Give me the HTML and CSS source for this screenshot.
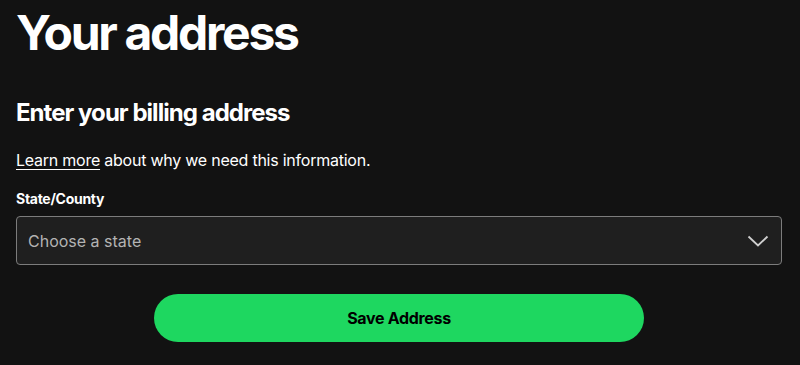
FILE: index.html
```html
<!DOCTYPE html>
<html lang="en">
<head>
    <meta charset="UTF-8">
    <meta name="viewport" content="width=device-width, initial-scale=1.0">
    <title>Your address</title>
    <link rel="stylesheet" href="styles.css">
</head>
<body>
    <main class="address-page">
        <h1 class="page-title">Your address</h1>

        <form class="address-form">
            <h2 class="form-title">Enter your billing address</h2>
            <p class="form-info"><a href="#">Learn more</a> about why we need this information.</p>

            <div class="field">
                <label for="state" class="field-label">State/County</label>
                <div class="select-wrap">
                    <select id="state" class="field-select">
                        <option value="">Choose a state</option>
                    </select>
                    <svg class="select-arrow" width="22" height="12" viewBox="0 0 22 12" aria-hidden="true">
                        <path d="M1.5 1.5 L11 10.5 L20.5 1.5" fill="none" stroke="#cfcfcf" stroke-width="1.8"/>
                    </svg>
                </div>
            </div>

            <div class="actions">
                <button type="submit" class="save-btn">Save Address</button>
            </div>
        </form>
    </main>
</body>
</html>
```

FILE: styles.css
```css
/* Reset and Base Styles */
* {
    margin: 0;
    padding: 0;
    box-sizing: border-box;
}

body {
    font-family: Inter, "Noto Sans", sans-serif;
    background-color: #121212;
    color: #ffffff;
}

.address-page {
    padding: 0 18px 0 16px;
}

.page-title {
    font-size: 48px;
    font-weight: 700;
    letter-spacing: -0.048em;
    line-height: 64px;
    padding-top: 1px;
}

/* Form */
.form-title {
    font-size: 24px;
    font-weight: 700;
    letter-spacing: -0.04em;
    line-height: 32px;
    margin-top: 32px;
}

.form-info {
    font-size: 16px;
    line-height: 24px;
    margin-top: 19px;
    letter-spacing: -0.015em;
}

.form-info a {
    color: #ffffff;
    text-decoration: underline;
    text-underline-offset: 3px;
}

.field {
    margin-top: 17px;
}

.field-label {
    display: block;
    font-size: 14px;
    font-weight: 700;
    line-height: 20px;
    margin-bottom: 7px;
    letter-spacing: -0.02em;
}

.select-wrap {
    position: relative;
}

.field-select {
    appearance: none;
    width: 100%;
    height: 49px;
    padding: 0 48px 0 11px;
    background-color: #1f1f1f;
    border: 1px solid #7c7c7c;
    border-radius: 4px;
    color: #b3b3b3;
    font-family: inherit;
    font-size: 16px;
}

.select-arrow {
    position: absolute;
    right: 13px;
    top: 19px;
    pointer-events: none;
}

/* Button */
.actions {
    display: flex;
    justify-content: center;
    margin-top: 29px;
}

.save-btn {
    width: 490px;
    height: 48px;
    border: none;
    border-radius: 500px;
    background-color: #1ed760;
    color: #000000;
    font-family: inherit;
    font-size: 16px;
    font-weight: 700;
    letter-spacing: -0.02em;
}
```
